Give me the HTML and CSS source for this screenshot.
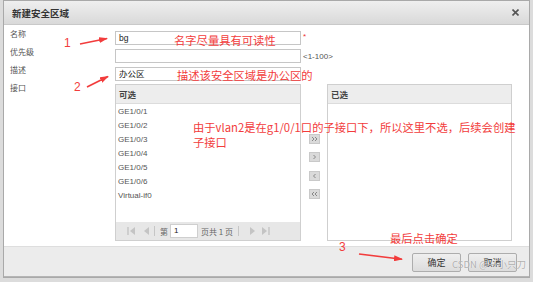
FILE: index.html
```html
<!DOCTYPE html>
<html lang="zh-CN">
<head>
  <meta charset="UTF-8" />
  <title>新建安全区域</title>
  <link rel="stylesheet" href="styles.css">
</head>
<body>
  <div class="window">
    <div class="dialog">
      <div class="titlebar">
        <span class="title">新建安全区域</span>
        <svg class="close" width="7" height="7" viewBox="0 0 7 7"><path d="M0.5 0.5 L6.5 6.5 M6.5 0.5 L0.5 6.5" stroke="#555" stroke-width="1.6"/></svg>
      </div>

      <div class="content">
        <div class="form">
          <label class="label">名称</label>
          <div class="field"><div class="input">bg</div><span class="req">*</span></div>

          <label class="label">优先级</label>
          <div class="field"><div class="input"></div><span class="hint">&lt;1-100&gt;</span></div>

          <label class="label">描述</label>
          <div class="field"><div class="input">办公区</div></div>

          <label class="label">接口</label>
          <div class="duallist">
            <div class="panel">
              <div class="panel-head">可选</div>
              <ul class="items">
                <li>GE1/0/1</li>
                <li>GE1/0/2</li>
                <li>GE1/0/3</li>
                <li>GE1/0/4</li>
                <li>GE1/0/5</li>
                <li>GE1/0/6</li>
                <li>Virtual-if0</li>
              </ul>
              <div class="pager">
                <svg width="9" height="8" viewBox="0 0 9 8"><path d="M1 0 V8" stroke="#c4c4c4" stroke-width="1.4"/><path d="M8 0 L3 4 L8 8 z" fill="#c4c4c4"/></svg>
                <svg class="pg-prev" width="6" height="8" viewBox="0 0 6 8"><path d="M6 0 L1 4 L6 8 z" fill="#c4c4c4"/></svg>
                <span class="sep"></span>
                <span class="pg-text">第</span>
                <div class="pg-input">1</div>
                <span class="pg-text">页共 1 页</span>
                <span class="sep"></span>
                <svg class="pg-next" width="6" height="8" viewBox="0 0 6 8"><path d="M0 0 L5 4 L0 8 z" fill="#c4c4c4"/></svg>
                <svg width="9" height="8" viewBox="0 0 9 8"><path d="M1 0 L6 4 L1 8 z" fill="#c4c4c4"/><path d="M8 0 V8" stroke="#c4c4c4" stroke-width="1.4"/></svg>
              </div>
            </div>

            <div class="movers">
              <span class="mover"><svg width="9" height="8" viewBox="0 0 9 8"><path d="M2 2 L4 4 L2 6 M5 2 L7 4 L5 6" fill="none" stroke="#888" stroke-width="1"/></svg></span>
              <span class="mover"><svg width="9" height="8" viewBox="0 0 9 8"><path d="M3.5 2 L5.5 4 L3.5 6" fill="none" stroke="#888" stroke-width="1"/></svg></span>
              <span class="mover"><svg width="9" height="8" viewBox="0 0 9 8"><path d="M5.5 2 L3.5 4 L5.5 6" fill="none" stroke="#888" stroke-width="1"/></svg></span>
              <span class="mover"><svg width="9" height="8" viewBox="0 0 9 8"><path d="M4 2 L2 4 L4 6 M7 2 L5 4 L7 6" fill="none" stroke="#888" stroke-width="1"/></svg></span>
            </div>

            <div class="panel panel-right">
              <div class="panel-head">已选</div>
            </div>
          </div>
        </div>
      </div>

      <div class="footer">
        <button class="btn">确定</button>
        <button class="btn">取消</button>
      </div>
    </div>

    <!-- red notes drawn over the screenshot -->
    <svg class="arrows" width="533" height="282" viewBox="0 0 533 282">
      <defs>
        <marker id="head" markerWidth="9" markerHeight="6" refX="8" refY="3" orient="auto" markerUnits="userSpaceOnUse">
          <path d="M0 0 L9 3 L0 6 z" fill="#f23c3c"/>
        </marker>
      </defs>
      <line x1="80" y1="44" x2="107" y2="38.5" stroke="#f23c3c" stroke-width="1.6" marker-end="url(#head)"/>
      <line x1="87" y1="87" x2="108" y2="76.5" stroke="#f23c3c" stroke-width="1.6" marker-end="url(#head)"/>
      <line x1="359" y1="254" x2="402" y2="259.2" stroke="#f23c3c" stroke-width="1.6" marker-end="url(#head)"/>
    </svg>
    <span class="num n1">1</span>
    <span class="num n2">2</span>
    <span class="num n3">3</span>
    <span class="note t1">名字尽量具有可读性</span>
    <span class="note t2">描述该安全区域是办公区的</span>
    <span class="note t3">由于vlan2是在g1/0/1口的子接口下，所以这里不选，后续会创建<br>子接口</span>
    <span class="note t4">最后点击确定</span>
    <span class="mark">CSDN @一小只刀</span>
  </div>
</body>
</html>
```

FILE: styles.css
```css
body {
  margin: 0;
  font-family: 'Liberation Sans', 'Noto Sans CJK SC', sans-serif;
  font-size: 8px;
  color: #444;
}

.window {
  position: relative;
  width: 533px;
  height: 282px;
  box-sizing: border-box;
  padding: 0 3px 4px 3px;
  background: #dcdcdc;
}

.dialog {
  height: 100%;
  box-sizing: border-box;
  border: 1px solid #a9a9a9;
  display: flex;
  flex-direction: column;
  background: #fff;
}

.titlebar {
  height: 23px;
  display: flex;
  align-items: center;
  justify-content: space-between;
  padding: 0 10px 0 8px;
  background: linear-gradient(#efefef, #d9d9d9);
  border-bottom: 1px solid #c9c9c9;
}

.title {
  font-family: 'Noto Sans CJK SC', sans-serif;
  font-size: 9.5px;
  font-weight: bold;
  color: #333;
}

.content {
  flex: 1;
  padding: 6px 0 0 6px;
}

.form {
  display: grid;
  grid-template-columns: 105px auto;
  row-gap: 4px;
}

.label {
  font-family: 'Noto Sans CJK SC', sans-serif;
  font-size: 8px;
  line-height: 10px;
  margin-top: -2px;
  color: #555;
}

.field {
  display: flex;
  align-items: center;
  gap: 2px;
}

.input {
  width: 186px;
  height: 14px;
  box-sizing: border-box;
  border: 1px solid #c6c6c6;
  padding-left: 3px;
  font-family: 'Liberation Sans', 'Noto Sans CJK SC', sans-serif;
  font-size: 8.5px;
  line-height: 12px;
  color: #222;
}

.req {
  color: #e33;
  font-size: 8px;
  align-self: flex-start;
  margin-top: 1px;
}

.hint {
  color: #555;
  font-size: 8px;
}

.duallist {
  display: flex;
  margin-top: -1px;
  height: 157px;
}

.panel {
  width: 186px;
  box-sizing: border-box;
  border: 1px solid #cfcfcf;
  display: flex;
  flex-direction: column;
}

.panel-right {
  width: 185px;
}

.panel-head {
  height: 18px;
  line-height: 18px;
  padding-left: 3px;
  background: #ededed;
  border-bottom: 1px solid #dcdcdc;
  font-family: 'Noto Sans CJK SC', sans-serif;
  font-size: 8.5px;
  font-weight: bold;
  color: #444;
}

.items {
  flex: 1;
  list-style: none;
  margin: 0;
  padding: 1px 0 0 2px;
}

.items li {
  height: 14px;
  line-height: 14px;
  color: #555;
}

.pager {
  height: 18px;
  display: flex;
  align-items: center;
  padding-left: 11px;
  background: #e7e7e7;
  font-family: 'Noto Sans CJK SC', sans-serif;
  font-size: 8px;
  color: #666;
}

.pg-prev {
  margin-left: 7px;
}

.sep {
  width: 1px;
  height: 10px;
  background: #c6c6c6;
  margin: 0 5px;
}

.pg-input {
  width: 28px;
  height: 14px;
  box-sizing: border-box;
  border: 1px solid #cfcfcf;
  background: #fff;
  margin: 0 3px 0 2px;
  padding-left: 3px;
  line-height: 12px;
  color: #222;
  font-family: 'Liberation Sans', sans-serif;
}

.pg-next {
  margin: 0 5px 0 6px;
}

.movers {
  width: 26px;
  display: flex;
  flex-direction: column;
  align-items: center;
  padding-top: 50px;
  gap: 8.3px;
}

.mover {
  width: 11px;
  height: 10px;
  box-sizing: border-box;
  background: #dadada;
  border: 1px solid #c9c9c9;
  display: flex;
  align-items: center;
  justify-content: center;
}

.footer {
  height: 31px;
  box-sizing: border-box;
  border-top: 1px solid #dedede;
  border-bottom: 1px solid #b5b5b5;
  background: #ececec;
  display: flex;
  justify-content: flex-end;
  align-items: flex-start;
  gap: 7px;
  padding: 6px 12px 0 0;
}

.btn {
  width: 49px;
  height: 19px;
  padding: 0;
  border: 1px solid #adadad;
  border-radius: 2px;
  background: linear-gradient(#efefef, #dcdcdc);
  font-family: 'Noto Sans CJK SC', sans-serif;
  font-size: 9px;
  color: #333;
}

.arrows {
  position: absolute;
  left: 0;
  top: 0;
  pointer-events: none;
}

.num,
.note {
  position: absolute;
  color: #f23c3c;
  font-family: 'Noto Sans CJK SC', sans-serif;
  white-space: nowrap;
}

.num {
  font-family: 'Liberation Sans', sans-serif;
  font-size: 12px;
  line-height: 16px;
}

.n1 { left: 64px; top: 35px; }
.n2 { left: 74px; top: 79px; }
.n3 { left: 339px; top: 239px; }

.note {
  font-size: 11.3px;
  line-height: 15px;
}

.t1 { left: 174px; top: 33px; }
.t2 { left: 177px; top: 68px; }
.t3 { left: 193px; top: 120px; }
.t4 { left: 390px; top: 231px; }

.mark {
  position: absolute;
  left: 452px;
  top: 258px;
  font-family: 'Noto Sans CJK SC', sans-serif;
  font-size: 9.5px;
  line-height: 12px;
  color: rgba(150, 150, 150, 0.75);
  text-shadow: 0 0 1px #fff;
  white-space: nowrap;
}
```
